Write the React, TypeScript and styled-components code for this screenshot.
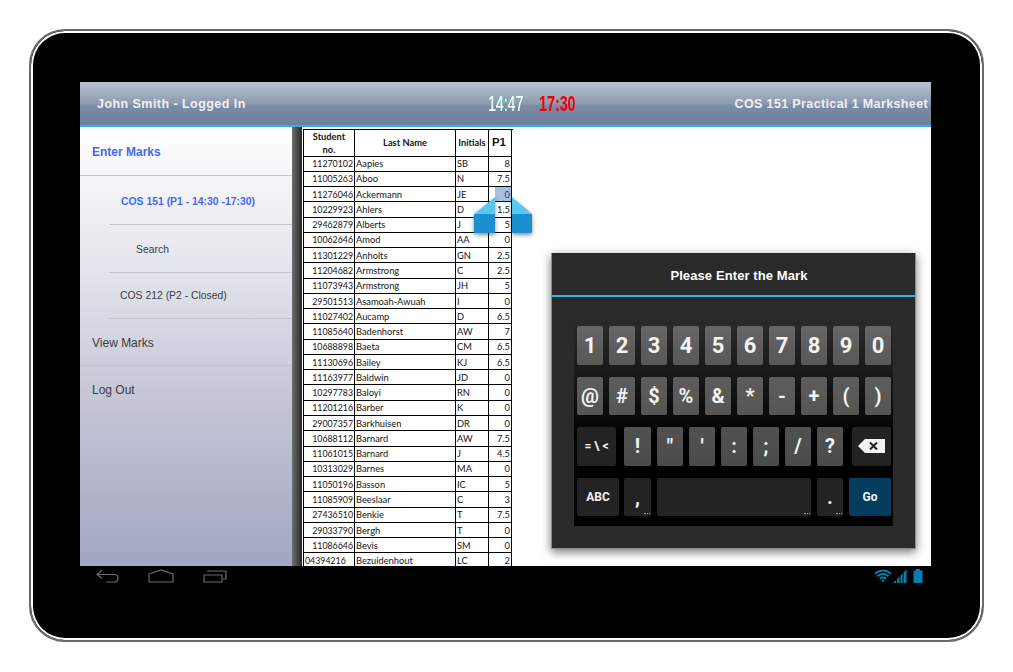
import React from 'react'
import styled, { createGlobalStyle, css } from 'styled-components'

const GlobalStyle = createGlobalStyle`
  html, body {
    margin: 0;
    padding: 0;
    background: #fff;
    font-family: 'Liberation Sans', Arial, sans-serif;
  }
`

const Page = styled.div`
  width: 1013px;
  height: 672px;
  padding: 29px 0 0 29px;
  box-sizing: border-box;
  overflow: hidden;
`

const Tablet = styled.div`
  width: 955px;
  height: 613px;
  box-sizing: border-box;
  border: 2px solid #6a6a6a;
  border-radius: 36px;
  background: #000;
  box-shadow: inset 0 0 0 2px #fff;
  padding: 51px 50px 0 49px;
  display: flex;
  flex-direction: column;
`

const Screen = styled.div`
  position: relative;
  width: 851px;
  height: 484px;
  background: #fff;
  display: flex;
  flex-direction: column;
  overflow: hidden;
`

const Header = styled.header`
  height: 45px;
  box-sizing: border-box;
  flex: none;
  border-bottom: 2px solid #2fb0e0;
  background: linear-gradient(#b9c2cf 0%, #8c9bb0 50%, #7a8ba5 56%, #6f809c 100%);
  display: grid;
  grid-template-columns: 408px 200px 1fr;
  align-items: center;
  color: #eef0f3;
  font-weight: bold;
`

const UserName = styled.div`
  padding-left: 17px;
  font-size: 12.5px;
  letter-spacing: 0.45px;
`

const Clocks = styled.div`
  display: flex;
  gap: 16px;
  align-items: center;
`

// no narrow digital font is installed, so the digits are squeezed horizontally
const Clock = styled.span<{ $over?: boolean }>`
  font-size: 22px;
  line-height: 1;
  display: block;
  width: 35px;
  white-space: nowrap;
  transform-origin: left center;
  ${(p) =>
    p.$over
      ? css`
          color: #f40000;
          font-weight: bold;
          transform: scaleX(0.65);
        `
      : css`
          color: #fff;
          font-weight: normal;
          transform: scaleX(0.64);
          text-shadow: 1px 0 0 rgba(90, 240, 230, 0.75);
        `}
`

const SheetTitle = styled.div`
  text-align: right;
  padding-right: 3px;
  font-size: 12.5px;
  letter-spacing: 0.37px;
`

const Body = styled.div`
  flex: 1;
  display: flex;
  min-height: 0;
`

const Sidebar = styled.nav`
  width: 212px;
  flex: none;
  background: linear-gradient(#ffffff 0%, #e6e7ee 30%, #c6c8d8 60%, #a2a6c2 100%);
  display: flex;
  flex-direction: column;
`

const MenuItem = styled.div<{ $h: number; $indent: number; $active?: boolean; $small?: boolean; $inset?: number; $faint?: boolean; $top?: number }>`
  height: ${(p) => p.$h}px;
  box-sizing: border-box;
  margin-left: ${(p) => p.$inset ?? 0}px;
  padding-left: ${(p) => p.$indent - (p.$inset ?? 0)}px;
  padding-top: ${(p) => p.$top ?? 1}px;
  display: flex;
  align-items: center;
  border-bottom: 1px solid ${(p) => (p.$faint ? '#c0c2d2' : '#c6c6c8')};
  font-size: ${(p) => (p.$small ? 10.4 : 12)}px;
  font-weight: ${(p) => (p.$active ? 'bold' : 'normal')};
  color: ${(p) => (p.$active ? '#4469f2' : '#3c3c42')};
`

const Stripe = styled.div`
  width: 10px;
  flex: none;
  background: linear-gradient(90deg, #6e6e6e, #262626);
`

const SheetArea = styled.div`
  flex: 1;
  padding: 2px 0 0 1px;
  min-width: 0;
`

const Sheet = styled.div`
  width: 209px;
  border: solid #000;
  border-width: 1px 0 0 1px;
  font-family: Lato, 'Liberation Sans', sans-serif;
  font-size: 9.3px;
  color: #141414;
`

const Row = styled.div<{ $head?: boolean }>`
  display: grid;
  grid-template-columns: 51px 101px 33px 23px;
  height: ${(p) => (p.$head ? '26.5px' : '15.27px')};
  box-sizing: border-box;
  font-weight: ${(p) => (p.$head ? 'bold' : 'normal')};
`

const Cell = styled.div<{ $align?: 'left' | 'right' | 'center'; $big?: boolean; $selected?: boolean; $num?: boolean }>`
  border: solid #000;
  border-width: 0 1px 1px 0;
  padding: 0 1px;
  display: flex;
  align-items: center;
  overflow: hidden;
  white-space: nowrap;
  box-sizing: border-box;
  line-height: 13px;
  justify-content: ${(p) =>
    p.$align === 'right' ? 'flex-end' : p.$align === 'center' ? 'center' : 'flex-start'};
  text-align: center;
  ${(p) => p.$num && css`
    font-size: 8.8px;
  `}
  ${(p) => p.$big && css`
    font-family: 'Liberation Sans', sans-serif;
    font-size: 11.5px;
    padding-right: 3px;
  `}
  ${(p) => p.$selected && css`
    background: linear-gradient(90deg, #fff 0 6px, #a6c0e4 6px);
    color: #24406a;
  `}
`

const Handle = styled.svg<{ $side: 'left' | 'right' }>`
  position: absolute;
  top: 115px;
  left: ${(p) => (p.$side === 'left' ? 394 : 432)}px;
  filter: drop-shadow(0 2px 2px rgba(0, 0, 0, 0.45));
`

const Dialog = styled.section`
  position: absolute;
  left: 471px;
  top: 171px;
  width: 365px;
  height: 296px;
  box-sizing: border-box;
  background: #2a2a2a;
  border: solid #8c8c8c;
  border-width: 0 1px 1px 1px;
  box-shadow: 0 3px 9px rgba(0, 0, 0, 0.55);
`

const DialogTitle = styled.h2`
  margin: 0;
  height: 44px;
  box-sizing: border-box;
  border-bottom: 2px solid #33b5e5;
  padding: 2px 0 0 11px;
  display: flex;
  align-items: center;
  justify-content: center;
  color: #fff;
  font-size: 13px;
  font-weight: bold;
  letter-spacing: 0.1px;
`

const Keyboard = styled.div`
  margin: 25px 0 0 22px;
  width: 319px;
  height: 204px;
  box-sizing: border-box;
  padding-top: 4px;
  background: linear-gradient(#2a2a2a 0%, #191a19 24%, #000 58%);
  display: flex;
  flex-direction: column;
  gap: 12px;
`

const KeyRow = styled.div`
  display: flex;
  height: 38.5px;
  padding-left: 3px;
`

const Key = styled.div<{ $w?: number; $gap?: number; $kind?: 'top' | 'mid' | 'low' | 'dark' | 'go'; $size?: number }>`
  width: ${(p) => p.$w ?? 26}px;
  margin-right: ${(p) => p.$gap ?? 6}px;
  flex: none;
  position: relative;
  border-radius: 2px;
  display: flex;
  align-items: center;
  justify-content: center;
  font-family: Roboto, 'Liberation Sans', sans-serif;
  font-weight: bold;
  font-size: ${(p) => p.$size ?? 20}px;
  color: #f2f2f2;
  ${(p) => {
    switch (p.$kind) {
      case 'top':
        return css`background: linear-gradient(#676567 0%, #625f62 45%, #5c5d5b 55%, #5a5a58 100%);`
      case 'mid':
        return css`background: linear-gradient(#5c5c5c, #555654);`
      case 'dark':
        return css`background: #222322;`
      case 'go':
        return css`background: #053d60;`
      default:
        return css`background: linear-gradient(#515151, #4a4b49);`
    }
  }}
`

const Ellipsis = styled.span`
  position: absolute;
  right: 1px;
  bottom: 2px;
  width: 6px;
  height: 0;
  border-bottom: 1px dotted #a0a0a0;
`

const NavBar = styled.div`
  flex: 1;
  display: flex;
  justify-content: space-between;
  padding: 3px 9px 0 16px;
`

const NavButtons = styled.div`
  display: flex;
  gap: 29px;
  align-items: flex-start;
  color: #6b6b6b;
`

const StatusIcons = styled.div`
  display: flex;
  align-items: flex-start;
  gap: 1px;
`

const topKeys = ['1', '2', '3', '4', '5', '6', '7', '8', '9', '0']
const midKeys = ['@', '#', '$', '%', '&', '*', '-', '+', '(', ')']
const lowKeys = ['!', '"', "'", ':', ';', '/', '?']

const students: [string, string, string, string][] = [
  ['11270102', 'Aapies', 'SB', '8'],
  ['11005263', 'Aboo', 'N', '7.5'],
  ['11276046', 'Ackermann', 'JE', '0'],
  ['10229923', 'Ahlers', 'D', '1.5'],
  ['29462879', 'Alberts', 'J', '5'],
  ['10062646', 'Amod', 'AA', '0'],
  ['11301229', 'Anholts', 'GN', '2.5'],
  ['11204682', 'Armstrong', 'C', '2.5'],
  ['11073943', 'Armstrong', 'JH', '5'],
  ['29501513', 'Asamoah-Awuah', 'I', '0'],
  ['11027402', 'Aucamp', 'D', '6.5'],
  ['11085640', 'Badenhorst', 'AW', '7'],
  ['10688898', 'Baeta', 'CM', '6.5'],
  ['11130696', 'Bailey', 'KJ', '6.5'],
  ['11163977', 'Baldwin', 'JD', '0'],
  ['10297783', 'Baloyi', 'RN', '0'],
  ['11201216', 'Barber', 'K', '0'],
  ['29007357', 'Barkhuisen', 'DR', '0'],
  ['10688112', 'Barnard', 'AW', '7.5'],
  ['11061015', 'Barnard', 'J', '4.5'],
  ['10313029', 'Barnes', 'MA', '0'],
  ['11050196', 'Basson', 'IC', '5'],
  ['11085909', 'Beeslaar', 'C', '3'],
  ['27436510', 'Benkie', 'T', '7.5'],
  ['29033790', 'Bergh', 'T', '0'],
  ['11086646', 'Bevis', 'SM', '0'],
  ['04394216', 'Bezuidenhout', 'LC', '2']
]

const App: React.FC = () => {
  return (
    <Page>
      <GlobalStyle />
      <Tablet>
        <Screen>
          <Header>
            <UserName>John Smith - Logged In</UserName>
            <Clocks>
              <Clock>14:47</Clock>
              <Clock $over>17:30</Clock>
            </Clocks>
            <SheetTitle>COS 151 Practical 1 Marksheet</SheetTitle>
          </Header>
          <Body>
            <Sidebar>
              <MenuItem $h={49} $indent={12} $active>Enter Marks</MenuItem>
              <MenuItem $h={49} $indent={41} $inset={29} $top={2} $active $small>COS 151 (P1 - 14:30 -17:30)</MenuItem>
              <MenuItem $h={48} $indent={56} $inset={29} $small>Search</MenuItem>
              <MenuItem $h={46} $indent={40} $inset={29} $top={0} $small>COS 212 (P2 - Closed)</MenuItem>
              <MenuItem $h={47} $indent={12} $faint>View Marks</MenuItem>
              <MenuItem $h={48} $indent={12} $faint>Log Out</MenuItem>
            </Sidebar>
            <Stripe />
            <SheetArea>
              <Sheet>
                <Row $head>
                  <Cell $align="center">Student<br />no.</Cell>
                  <Cell $align="center">Last Name</Cell>
                  <Cell $align="center">Initials</Cell>
                  <Cell $align="center" $big>P1</Cell>
                </Row>
                {students.map(([no, name, initials, mark], index) => (
                  <Row key={no}>
                    <Cell $num $align={no.startsWith('0') ? 'left' : 'right'}>{no}</Cell>
                    <Cell>{name}</Cell>
                    <Cell>{initials}</Cell>
                    <Cell $align="right" $selected={index === 2}>{mark}</Cell>
                  </Row>
                ))}
              </Sheet>
            </SheetArea>
          </Body>

          <Handle $side="left" width="22" height="37" viewBox="0 0 22 37">
            <polygon points="21,0 21,17 0,17" fill="#5ac8ee" />
            <rect x="0" y="17" width="21" height="19" rx="1" fill="#1b8fd0" />
          </Handle>
          <Handle $side="right" width="22" height="37" viewBox="0 0 22 37">
            <polygon points="0,0 0,17 20,17" fill="#5ac8ee" />
            <rect x="0" y="17" width="20" height="19" rx="1" fill="#1b8fd0" />
          </Handle>

          <Dialog>
            <DialogTitle>Please Enter the Mark</DialogTitle>
            <Keyboard>
              <KeyRow>
                {topKeys.map((k) => (
                  <Key key={k} $kind="top" $size={22}>{k}</Key>
                ))}
              </KeyRow>
              <KeyRow>
                {midKeys.map((k) => (
                  <Key key={k} $kind="mid">{k}</Key>
                ))}
              </KeyRow>
              <KeyRow>
                <Key $kind="dark" $w={39} $gap={8} $size={12}>= \ &lt;</Key>
                {lowKeys.map((k) => (
                  <Key key={k} $w={k === '!' ? 27 : 26} $gap={k === '?' ? 9 : 6}>{k}</Key>
                ))}
                <Key $kind="dark" $w={39}>
                  <svg width="27" height="14" viewBox="0 0 27 14">
                    <path d="M0 7 L7 0 H27 V14 H7 Z" fill="#f2f2f2" />
                    <path d="M12 3.5 L19 10.5 M19 3.5 L12 10.5" stroke="#222" strokeWidth="2" />
                  </svg>
                </Key>
              </KeyRow>
              <KeyRow>
                <Key $kind="dark" $w={42} $gap={5} $size={12}>ABC</Key>
                <Key $kind="dark" $w={27} $size={20}>,<Ellipsis /></Key>
                <Key $kind="dark" $w={154}><Ellipsis /></Key>
                <Key $kind="dark" $size={20}>.<Ellipsis /></Key>
                <Key $kind="go" $w={42} $size={12}>Go</Key>
              </KeyRow>
            </Keyboard>
          </Dialog>
        </Screen>

        <NavBar>
          <NavButtons>
            <svg width="23" height="14" viewBox="0 0 23 14" fill="none" stroke="currentColor" strokeWidth="1.2">
              <path d="M6 1 L1 5.5 L6 9.5 M1 5.5 H19 Q22 5.5 22 9 Q22 13 18 13 H10" />
            </svg>
            <svg width="26" height="14" viewBox="0 0 26 14" fill="none" stroke="currentColor" strokeWidth="1.2">
              <path d="M1 5 L13 1 L25 5 V13 H1 Z" />
            </svg>
            <svg width="24" height="13" viewBox="0 0 24 13" fill="none" stroke="currentColor" strokeWidth="1.2" style={{ marginTop: 1 }}>
              <path d="M1 5 H19 V12 H1 Z M5 2 V1 H23 V9 H20" />
            </svg>
          </NavButtons>
          <StatusIcons>
            <svg width="18" height="14" viewBox="0 0 18 14" fill="none" stroke="#0480b0" strokeWidth="2">
              <path d="M1 4.6 Q9 -1.6 17 4.6 M3.4 7.2 Q9 2.8 14.6 7.2 M5.8 9.7 Q9 7.2 12.2 9.7" />
              <path d="M7.2 11 L9 13.6 L10.8 11 Q9 9.8 7.2 11 Z" fill="#0480b0" stroke="none" />
            </svg>
            <svg width="14" height="14" viewBox="0 0 14 14" fill="#0480b0">
              <path d="M0 14 L3 11 V14 Z M4 14 V10 L6.5 7.5 V14 Z M7.5 14 V6.5 L9.5 4.5 V14 Z M10.5 14 V3.5 L13.5 0.5 V14 Z" />
            </svg>
            <svg width="10" height="14" viewBox="0 0 10 14" fill="#0480b0" style={{ marginLeft: 5 }}>
              <path d="M3 0 H7 V1.5 H9.5 V14 H0.5 V1.5 H3 Z" />
            </svg>
          </StatusIcons>
        </NavBar>
      </Tablet>
    </Page>
  )
}

export default App
